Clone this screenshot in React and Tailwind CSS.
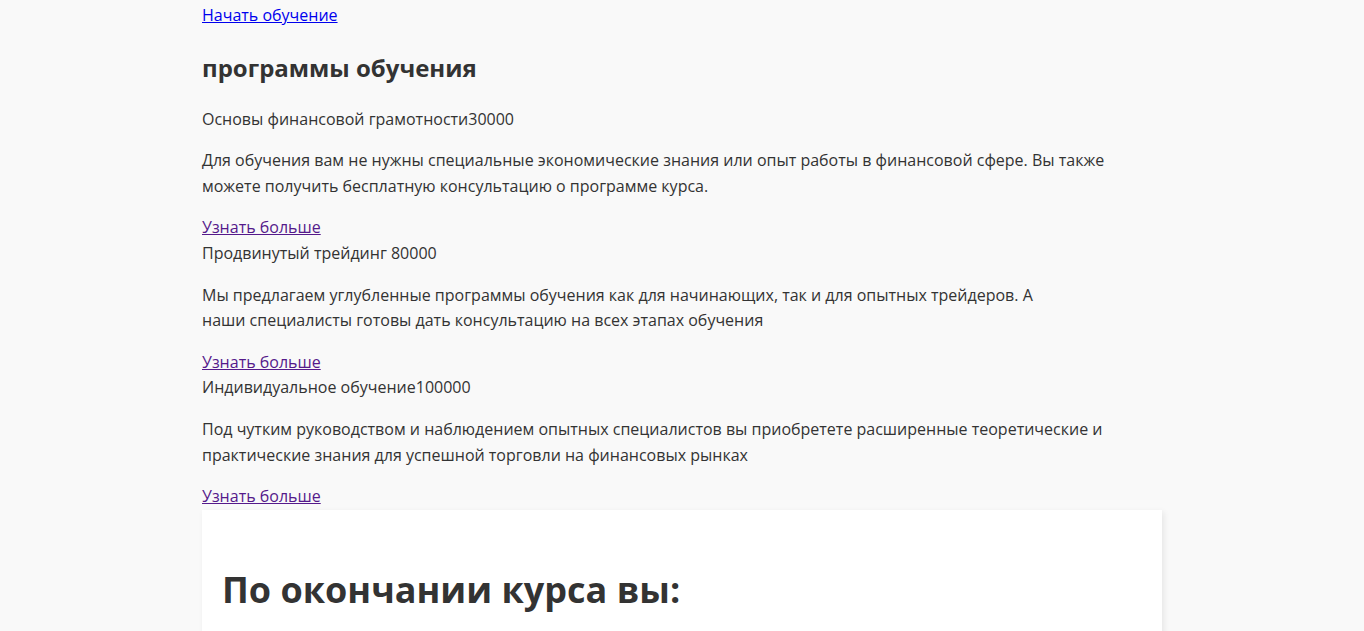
import React from "react";

const programs = [
  {
    title: "Основы финансовой грамотности30000",
    text: "Для обучения вам не нужны специальные экономические знания или опыт работы в финансовой сфере. Вы также можете получить бесплатную консультацию о программе курса.",
  },
  {
    title: "Продвинутый трейдинг 80000",
    text: (
      <>
        Мы предлагаем углубленные программы обучения как для начинающих, так и для опытных трейдеров. А
        <br />
        наши специалисты готовы дать консультацию на всех этапах обучения
      </>
    ),
  },
  {
    title: "Индивидуальное обучение100000",
    text: "Под чутким руководством и наблюдением опытных специалистов вы приобретете расширенные теоретические и практические знания для успешной торговли на финансовых рынках",
  },
];

export default function App() {
  return (
    <div className="min-h-screen bg-[#f9f9f9] font-['Open_Sans',sans-serif] text-[16px] leading-[1.6] text-[#333]">
      <div className="mx-auto w-[960px] pt-[3px]">
        <a href="#" className="text-[#0000ee] underline">
          Начать обучение
        </a>

        <h2 className="mt-[24px] mb-[24px] text-[24px] font-bold leading-[30px]">программы обучения</h2>

        {programs.map((p, i) => (
          <div key={i}>
            <p>{p.title}</p>
            <p className="my-4">{p.text}</p>
            <a href="#" className="text-[#551a8b] underline">
              Узнать больше
            </a>
          </div>
        ))}

        <div className="bg-white px-5 pt-[58px] pb-10 shadow-[2px_2px_6px_rgba(0,0,0,0.08)]">
          <h2 className="text-[36px] font-bold leading-[44px]">По окончании курса вы:</h2>
        </div>
      </div>
    </div>
  );
}
